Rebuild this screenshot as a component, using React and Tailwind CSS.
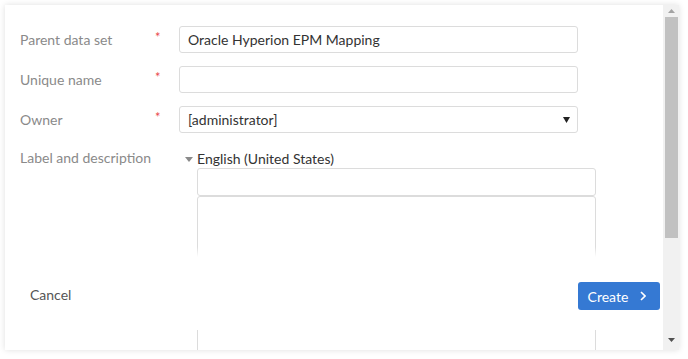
import React from "react";

function Row({ label, children }) {
  return (
    <div className="flex items-center h-[27px] mb-[13px]">
      <div className="w-[135px] text-[14px] text-[#8a8a8a]">{label}</div>
      <div className="w-[24px] text-[13px] text-[#e9484d] -mt-[4px]">*</div>
      {children}
    </div>
  );
}

export default function App() {
  return (
    <div
      className="w-[688px] h-[359px] bg-white p-[5px] overflow-hidden"
      style={{ fontFamily: "Lato, 'Open Sans', sans-serif" }}
    >
      <div className="relative flex w-[674px] h-[345px] bg-white shadow-[0_0_6px_rgba(0,0,0,0.13)]">
        <div className="relative flex-1 overflow-hidden pt-[21px] pl-[15px]">
          <Row label="Parent data set">
            <div className="w-[399px] h-[27px] border border-[#dcdcdc] rounded-[3px] flex items-center px-[8px] text-[14px] text-[#333]">
              Oracle Hyperion EPM Mapping
            </div>
          </Row>
          <Row label="Unique name">
            <div className="w-[399px] h-[27px] border border-[#dcdcdc] rounded-[3px]" />
          </Row>
          <Row label="Owner">
            <div className="w-[399px] h-[27px] border border-[#dcdcdc] rounded-[3px] flex items-center justify-between pl-[8px] pr-[7px] text-[14px] text-[#333]">
              <span>[administrator]</span>
              <svg width="7" height="6" viewBox="0 0 7 6">
                <polygon points="0,0 7,0 3.5,6" fill="#222" />
              </svg>
            </div>
          </Row>
          <div className="flex pt-[2px]">
            <div className="w-[159px] text-[14px] text-[#8a8a8a] leading-[20px]">
              Label and description
            </div>
            <div className="flex flex-col">
              <div className="flex items-center h-[20px] pl-[6px] text-[14px] text-[#333]">
                <svg width="8" height="5" viewBox="0 0 8 5" className="mr-[4px] mt-[2px]">
                  <polygon points="0,0 8,0 4,5" fill="#8a8a8a" />
                </svg>
                English (United States)
              </div>
              <div className="ml-[18px] w-[399px] h-[28px] border border-[#dcdcdc] rounded-[3px]" />
              <div className="ml-[18px] w-[399px] h-[200px] border border-[#dcdcdc] rounded-[3px]" />
            </div>
          </div>

          <div className="absolute left-0 right-0 top-[242px] h-[83px] flex flex-col">
            <div className="h-[10px] bg-gradient-to-b from-white/0 to-white" />
            <div className="flex-1 bg-white flex items-center justify-between pl-[25px] pr-[3px] pt-[5px]">
              <span className="text-[14px] text-[#555] -mt-[3px]">Cancel</span>
              <div className="w-[82px] h-[28px] rounded-[3px] bg-[#3579d3] flex items-center justify-center gap-[12px] text-white text-[14px] pr-[4px]">
                <span>Create</span>
                <svg width="6" height="10" viewBox="0 0 6 10">
                  <polyline points="1,1 5,5 1,9" fill="none" stroke="white" strokeWidth="1.6" />
                </svg>
              </div>
            </div>
          </div>
        </div>

        <div className="w-[16px] h-full bg-[#f1f1f1] flex flex-col items-center">
          <div className="h-[12px] flex items-center justify-center">
            <svg width="7" height="4" viewBox="0 0 7 4">
              <polygon points="0,4 7,4 3.5,0" fill="#a3a3a3" />
            </svg>
          </div>
          <div className="w-[13px] ml-[1px] h-[221px] bg-[#c1c1c1]" />
          <div className="flex-1" />
          <div className="h-[14px] flex items-start justify-center pt-[2px]">
            <svg width="7" height="4" viewBox="0 0 7 4">
              <polygon points="0,0 7,0 3.5,4" fill="#505050" />
            </svg>
          </div>
        </div>
      </div>
    </div>
  );
}
